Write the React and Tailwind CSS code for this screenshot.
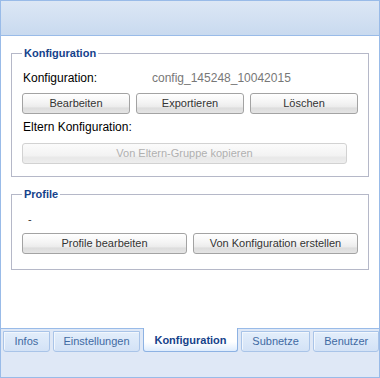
import React from "react";

const btn =
  "h-[21px] rounded-[3px] border border-[#a3a3a3] bg-[linear-gradient(to_bottom,#ffffff_0%,#f4f4f4_45%,#ebebeb_70%,#dcdcdc_72%,#e4e4e4_100%)] text-[11px] leading-[19px] text-[#333]";

const tabs = [
  { label: "Infos", w: "w-[47px]" },
  { label: "Einstellungen", w: "w-[88px]" },
  { label: "Konfiguration", w: "w-[95px]", active: true },
  { label: "Subnetze", w: "w-[70px]" },
  { label: "Benutzer", w: "w-[66px]" },
];

const App = () => {
  return (
    <div className="w-[380px] h-[378px] border border-[#99bbe8] flex flex-col bg-white font-['Liberation_Sans',Arial,sans-serif]">
      {/* header */}
      <div className="h-[35px] shrink-0 border-b border-[#99bbe8] bg-[linear-gradient(to_bottom,#dce7f5,#c9daef)]" />

      {/* body */}
      <div className="flex-1 px-[10px] pt-[10px] border-b border-[#99bbe8]">
        <fieldset className="border border-[#b5b8c8] pl-[10px] pr-[10px] pb-[12px]">
          <legend className="px-[2px] text-[11px] leading-[14px] font-bold text-[#15428b]">
            Konfiguration
          </legend>
          <div className="mt-[10px] flex items-center h-[16px]">
            <span className="w-[130px] pl-[1px] text-[12px] leading-[16px] text-black">Konfiguration:</span>
            <span className="text-[12px] leading-[16px] text-[#777]">config_145248_10042015</span>
          </div>
          <div className="mt-[7px] grid grid-cols-3 gap-[6px]">
            <button className={btn}>Bearbeiten</button>
            <button className={btn}>Exportieren</button>
            <button className={btn}>Löschen</button>
          </div>
          <div className="mt-[5px] pl-[1px] text-[12px] leading-[16px] text-black">Eltern Konfiguration:</div>
          <button
            disabled
            className="mt-[8px] w-[325px] h-[21px] rounded-[3px] border border-[#d2d2d2] bg-[linear-gradient(to_bottom,#fbfbfb_0%,#f3f3f3_60%,#e8e8e8_72%,#eeeeee_100%)] text-[11px] leading-[19px] text-[#b0b0b0]"
          >
            Von Eltern-Gruppe kopieren
          </button>
        </fieldset>

        <fieldset className="mt-[10px] border border-[#b5b8c8] pl-[10px] pr-[10px] pb-[15px]">
          <legend className="px-[2px] text-[11px] leading-[14px] font-bold text-[#15428b]">Profile</legend>
          <div className="mt-[11px] pl-[6px] text-[11px] leading-[14px] text-[#333]">-</div>
          <div className="mt-[7px] grid grid-cols-2 gap-[6px]">
            <button className={btn}>Profile bearbeiten</button>
            <button className={btn}>Von Konfiguration erstellen</button>
          </div>
        </fieldset>
      </div>

      {/* tab strip */}
      <div className="h-[48px] shrink-0 bg-[#dfe8f6] flex gap-[3px] pl-[2px] items-start">
        {tabs.map((t) =>
          t.active ? (
            <div
              key={t.label}
              className={`${t.w} -mt-[1px] h-[24px] pt-[3px] rounded-b-[3px] border-x border-b border-[#8db2e3] bg-[linear-gradient(to_bottom,#ffffff_60%,#deecfd)] text-center text-[11px] leading-[19px] font-bold text-[#15428b]`}
            >
              {t.label}
            </div>
          ) : (
            <div
              key={t.label}
              className={`${t.w} mt-[2px] h-[21px] rounded-b-[3px] border border-[#a9c4e8] bg-[linear-gradient(to_bottom,#e3eefb,#d3e2f6)] text-center text-[11px] leading-[19px] text-[#416aa3] shadow-[inset_1px_1px_0_#f2f7fd]`}
            >
              {t.label}
            </div>
          )
        )}
      </div>
    </div>
  );
};

export default App;
